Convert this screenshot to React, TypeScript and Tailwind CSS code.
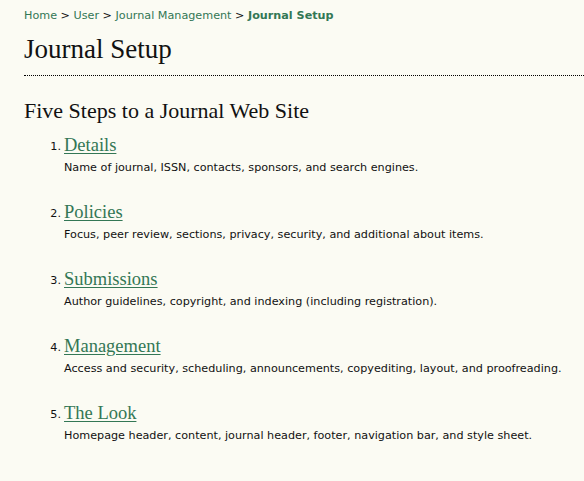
import React from "react";

const steps = [
  { n: 1, title: "Details", desc: "Name of journal, ISSN, contacts, sponsors, and search engines." },
  { n: 2, title: "Policies", desc: "Focus, peer review, sections, privacy, security, and additional about items." },
  { n: 3, title: "Submissions", desc: "Author guidelines, copyright, and indexing (including registration)." },
  { n: 4, title: "Management", desc: "Access and security, scheduling, announcements, copyediting, layout, and proofreading." },
  { n: 5, title: "The Look", desc: "Homepage header, content, journal header, footer, navigation bar, and style sheet." },
];

const serif = "font-['Liberation_Serif','Times_New_Roman',serif]";

export default function App() {
  return (
    <div className="min-h-[481px] w-full bg-[#fbfbf3] text-[#111] font-['DejaVu_Sans','Verdana',sans-serif] text-[11.2px] pl-[24px] pt-[9px]">
      <div className="leading-[14px] text-[#375]">
        <a className="text-[#375]">Home</a>
        <span className="text-[#111]"> &gt; </span>
        <a className="text-[#375]">User</a>
        <span className="text-[#111]"> &gt; </span>
        <a className="text-[#375]">Journal Management</a>
        <span className="text-[#111]"> &gt; </span>
        <a className="text-[#375] font-bold">Journal Setup</a>
      </div>
      <h2 className={`${serif} text-[27px] leading-[32px] mt-[10px] text-[#111]`}>Journal Setup</h2>
      <div className="mt-[10px] border-t border-dotted border-black" />
      <h3 className={`${serif} text-[22px] leading-[26px] mt-[22px] text-[#111]`}>Five Steps to a Journal Web Site</h3>
      <ol className="mt-[10px] pl-[40px]">
        {steps.map((s) => (
          <li key={s.n} className="mb-[26px]">
            <div className="flex items-baseline">
              <span className="w-0 relative">
                <span className="absolute right-[3px] -top-[12px] text-[11.2px]">{s.n}.</span>
              </span>
              <a className={`${serif} text-[18.5px] leading-[22px] text-[#375] underline underline-offset-[2px]`}>{s.title}</a>
            </div>
            <div className="mt-[5px] leading-[14px]">{s.desc}</div>
          </li>
        ))}
      </ol>
    </div>
  );
}
